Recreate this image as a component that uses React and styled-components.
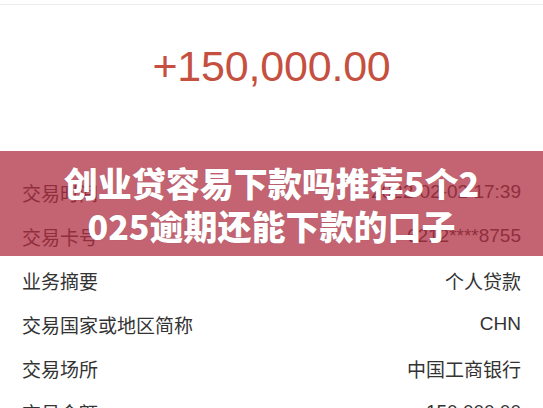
import React from 'react'
import styled, { createGlobalStyle } from 'styled-components'

const rows = [
  { label: '交易时间', value: '2022-02-02 17:39' },
  { label: '交易卡号', value: '6212****8755' },
  { label: '业务摘要', value: '个人贷款' },
  { label: '交易国家或地区简称', value: 'CHN' },
  { label: '交易场所', value: '中国工商银行' },
  { label: '交易金额', value: '150,000.00' },
]

const Global = createGlobalStyle`
  html, body {
    margin: 0;
    padding: 0;
    background: #fff;
  }
  body {
    font-family: 'Liberation Sans', 'Noto Sans CJK SC', sans-serif;
  }
`

const Screen = styled.div`
  position: relative;
  width: 543px;
  height: 408px;
  overflow: hidden;
  background: #fff;
`

const NavEdge = styled.div`
  height: 4px;
  border-bottom: 1px solid #ececec;
`

const Amount = styled.div`
  height: 165px;
  display: flex;
  align-items: center;
  justify-content: center;
  padding-bottom: 42px;
  box-sizing: border-box;
  color: #c5503f;
  font-family: 'Liberation Sans', sans-serif;
  font-size: 43px;
  letter-spacing: -0.2px;
`

const List = styled.ul`
  list-style: none;
  margin: 0;
  padding: 0 22px;
`

const Row = styled.li`
  height: 44px;
  display: flex;
  align-items: center;
  justify-content: space-between;
  font-size: 19px;
  color: #333;
  font-family: 'Liberation Sans', 'Noto Sans CJK SC', sans-serif;
`

const Banner = styled.div`
  position: absolute;
  left: 0;
  right: 0;
  top: 151px;
  height: 105px;
  background: rgba(175, 45, 65, 0.74);
  display: flex;
  flex-direction: column;
  align-items: center;
  justify-content: center;
  color: #fff;
  font-family: 'Noto Sans CJK SC', sans-serif;
  font-weight: 900;
  font-size: 34px;
  line-height: 43px;
  text-shadow: 0 0 1px rgba(0, 0, 0, 0.2);
`

const App = () => {
  return (
    <Screen>
      <Global />
      <NavEdge />
      <Amount>+150,000.00</Amount>
      <List>
        {rows.map((row, index) => (
          <Row key={index}>
            <span>{row.label}</span>
            <span>{row.value}</span>
          </Row>
        ))}
      </List>
      <Banner>
        <div>创业贷容易下款吗推荐5个2</div>
        <div>025逾期还能下款的口子</div>
      </Banner>
    </Screen>
  )
}

export default App
